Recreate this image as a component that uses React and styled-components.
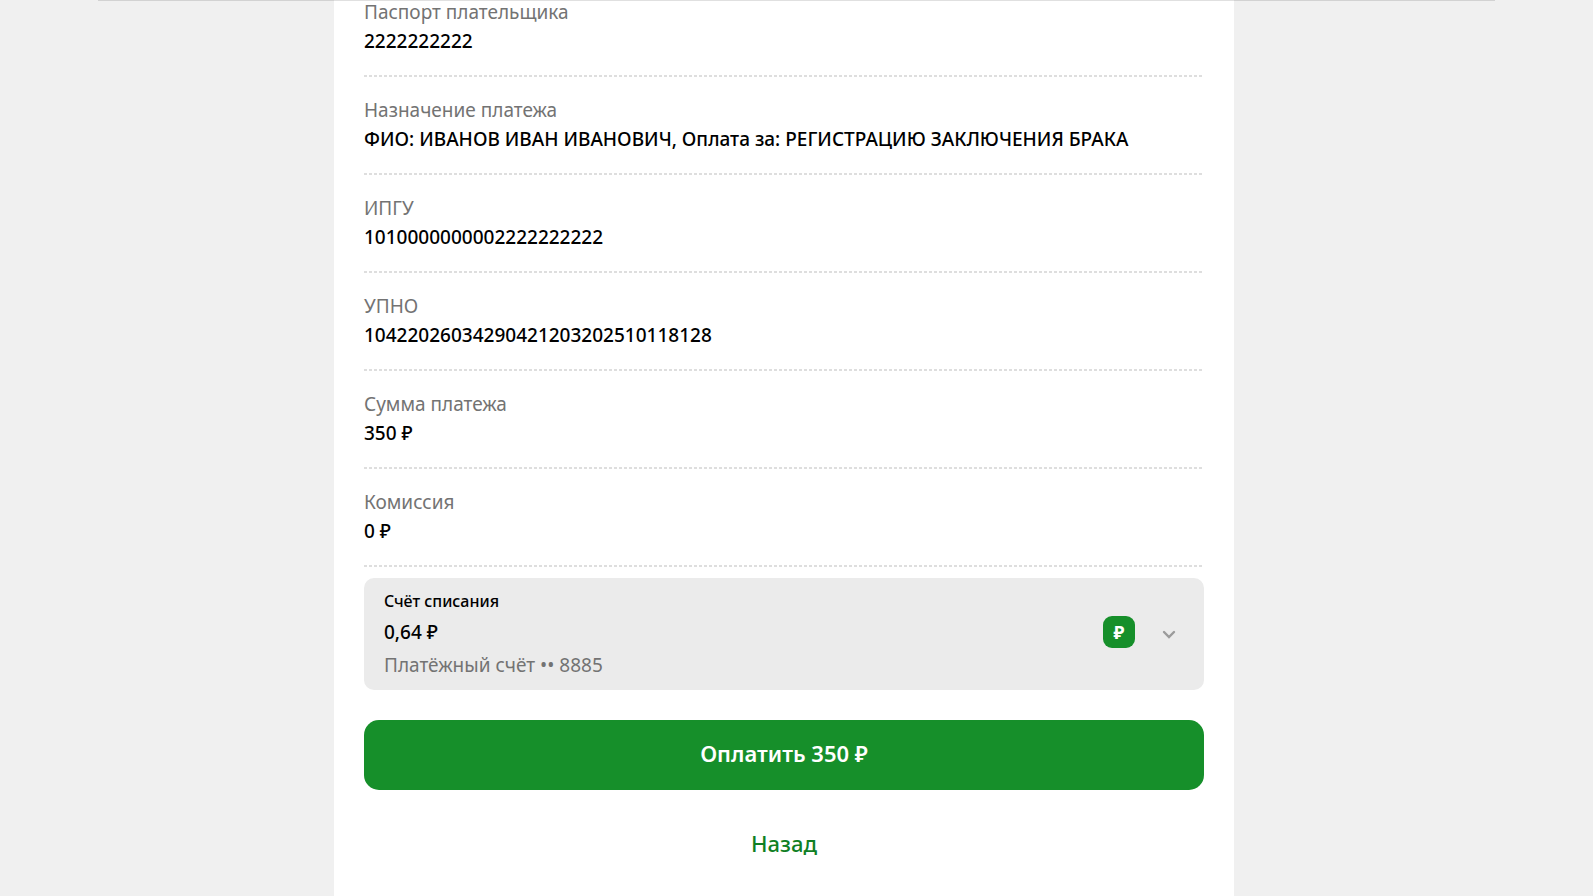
import styled, { createGlobalStyle } from "styled-components";

const COLORS = {
  page: "#f0f0f0",
  green: "#168f2a",
  greenText: "#107f24",
  card: "#ebebeb",
  muted: "#737373",
  dash: "#dedede",
};

const GlobalStyle = createGlobalStyle`
  * {
    box-sizing: border-box;
  }

  body {
    margin: 0;
    background: ${COLORS.page};
    color: #000;
    font-family: "Noto Sans", "Open Sans", sans-serif;
    font-size: 19px;
  }

  button {
    border: 0;
    color: inherit;
    font-family: inherit;
    cursor: pointer;
  }
`;

const Page = styled.div`
  display: flex;
  justify-content: center;
  min-height: 100vh;
  padding-right: 25px;
  overflow: hidden;
`;

const HeaderLine = styled.div`
  position: absolute;
  top: 0;
  left: 98px;
  right: 98px;
  height: 1px;
  background: rgba(0, 0, 0, 0.12);
`;

const Panel = styled.main`
  width: 100%;
  max-width: 900px;
  padding: 0 30px 36px;
  background: #fff;
`;

const Details = styled.dl`
  margin: -21px 0 11px;
`;

const Field = styled.div`
  padding: 19px 0 21px;
  line-height: 29px;
  background: repeating-linear-gradient(
      to right,
      ${COLORS.dash} 0 3px,
      transparent 3px 5px
    )
    bottom / 100% 2px no-repeat;

  dt {
    color: ${COLORS.muted};
  }

  dd {
    margin: 0;
    font-weight: 500;
  }
`;

const Account = styled.button`
  display: flex;
  align-items: center;
  width: 100%;
  padding: 10px 23px 10px 20px;
  border-radius: 10px;
  background: ${COLORS.card};
  text-align: left;
`;

const AccountInfo = styled.span`
  display: flex;
  flex: 1;
  flex-direction: column;
`;

const AccountTitle = styled.span`
  font-size: 16px;
  font-weight: 500;
  line-height: 26px;
`;

const AccountBalance = styled.span`
  font-size: 19px;
  font-weight: 500;
  line-height: 36px;
`;

const AccountName = styled.span`
  color: ${COLORS.muted};
  font-size: 19px;
  line-height: 30px;
`;

const AccountControls = styled.span`
  display: flex;
  align-items: center;
  gap: 22px;
  padding-bottom: 4px;
`;

const Currency = styled.span`
  width: 32px;
  border-radius: 9px;
  background: ${COLORS.green};
  color: #fff;
  font-size: 18px;
  font-weight: 700;
  line-height: 32px;
  text-align: center;
`;

const Chevron = styled.svg`
  width: 24px;
  height: 24px;
  fill: none;
  stroke: #9b9b9b;
  stroke-width: 2.4;
  stroke-linecap: round;
`;

const PayButton = styled.button`
  display: block;
  width: 100%;
  margin-top: 30px;
  padding: 15px 20px 19px;
  border-radius: 15px;
  background: ${COLORS.green};
  color: #fff;
  font-size: 22px;
  font-weight: 600;
  line-height: 36px;
`;

const BackButton = styled.button`
  display: block;
  margin: 35px auto 0;
  padding: 0;
  background: none;
  color: ${COLORS.greenText};
  font-size: 22px;
  font-weight: 500;
  line-height: 36px;
`;

const FIELDS = [
  { label: "Паспорт плательщика", value: "2222222222" },
  {
    label: "Назначение платежа",
    value: "ФИО: ИВАНОВ ИВАН ИВАНОВИЧ, Оплата за: РЕГИСТРАЦИЮ ЗАКЛЮЧЕНИЯ БРАКА",
  },
  { label: "ИПГУ", value: "1010000000002222222222" },
  { label: "УПНО", value: "10422026034290421203202510118128" },
  { label: "Сумма платежа", value: "350 ₽" },
  { label: "Комиссия", value: "0 ₽" },
];

const App = () => (
  <>
    <GlobalStyle />
    <Page>
      <HeaderLine />
      <Panel>
        <Details>
          {FIELDS.map(({ label, value }) => (
            <Field key={label}>
              <dt>{label}</dt>
              <dd>{value}</dd>
            </Field>
          ))}
        </Details>
        <Account type="button" aria-haspopup="listbox">
          <AccountInfo>
            <AccountTitle>Счёт списания</AccountTitle>
            <AccountBalance>0,64 ₽</AccountBalance>
            <AccountName>Платёжный счёт •• 8885</AccountName>
          </AccountInfo>
          <AccountControls>
            <Currency>₽</Currency>
            <Chevron viewBox="0 0 24 24" aria-hidden="true">
              <path d="M7 12l5 5 5-5" />
            </Chevron>
          </AccountControls>
        </Account>
        <PayButton type="button">Оплатить 350 ₽</PayButton>
        <BackButton type="button">Назад</BackButton>
      </Panel>
    </Page>
  </>
);

export default App;
